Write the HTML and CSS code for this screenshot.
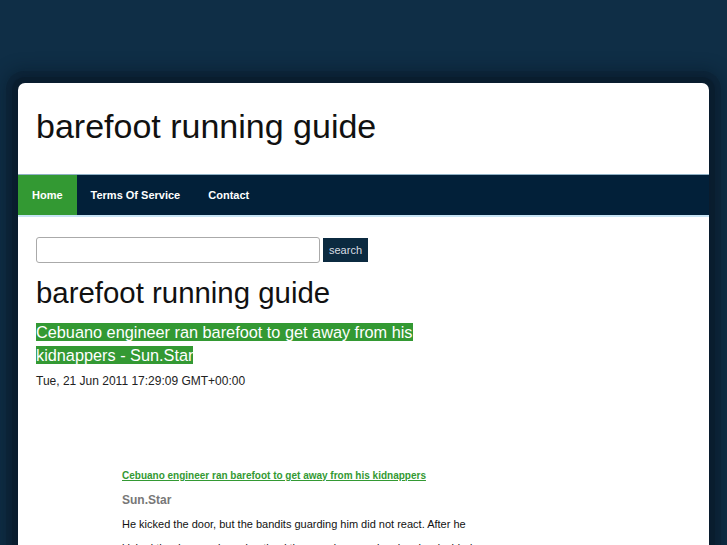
FILE: index.html
```html
<!DOCTYPE html>
<html>
<head>
<meta charset="utf-8">
<link rel="stylesheet" href="styles.css">
</head>
<body>
<div class="page">
  <div class="card">
    <header class="header">
      <h1 class="site-title">barefoot running guide</h1>
    </header>
    <nav class="nav">
      <a class="nav-item active" href="#">Home</a>
      <a class="nav-item" href="#">Terms Of Service</a>
      <a class="nav-item" href="#">Contact</a>
    </nav>
    <main class="content">
      <form class="search">
        <input class="search-input" type="text">
        <button class="search-btn" type="button">search</button>
      </form>
      <h2 class="page-title">barefoot running guide</h2>
      <h3 class="post-title"><a href="#">Cebuano engineer ran barefoot to get away from his kidnappers - Sun.Star</a></h3>
      <div class="post-date">Tue, 21 Jun 2011 17:29:09 GMT+00:00</div>
      <div class="post-body">
        <a class="src-link" href="#">Cebuano engineer ran barefoot to get away from his kidnappers</a>
        <div class="src-name">Sun.Star</div>
        <p class="excerpt">He kicked the door, but the bandits guarding him did not react. After he kicked the door again and noticed the guards were sleeping, he decided</p>
      </div>
    </main>
  </div>
</div>
</body>
</html>
```

FILE: styles.css
```css
html, body {
  margin: 0;
  padding: 0;
}
body {
  background: #0f2e46;
  font-family: "Liberation Sans", Arial, sans-serif;
  color: #111;
  overflow: hidden;
  height: 545px;
}
.page {
  padding: 83px 18px 0 18px;
}
.card {
  background: #fff;
  border-radius: 7px 7px 0 0;
  box-shadow: 0 0 0 6px rgba(8, 24, 38, 0.35), 0 0 0 12px rgba(8, 24, 38, 0.25), 0 0 16px 14px rgba(5, 18, 30, 0.35);
  min-height: 470px;
}
.header {
  height: 91px;
  padding: 0 18px;
  display: flex;
  align-items: center;
}
.site-title {
  margin: 0;
  font-size: 34px;
  font-weight: normal;
  color: #111;
  padding-bottom: 4px;
}
.nav {
  display: flex;
  background: #022039;
  border-top: 1px solid #8fb0c4;
  border-bottom: 2px solid #c7e4f5;
  height: 40px;
}
.nav-item {
  display: flex;
  align-items: center;
  padding: 0 14px;
  color: #fff;
  font-size: 11px;
  font-weight: bold;
  text-decoration: none;
}
.nav-item.active {
  background: #339933;
}
.content {
  padding: 20px 18px 0 18px;
}
.search {
  display: flex;
  align-items: center;
  gap: 3px;
  margin: 0;
}
.search-input {
  width: 280px;
  height: 22px;
  border: 1px solid #aaa;
  border-radius: 3px;
  padding: 1px;
  margin: 0;
}
.search-btn {
  background: #0b2a40;
  color: #d8dde2;
  border: none;
  font-family: "Liberation Sans", Arial, sans-serif;
  font-size: 11px;
  height: 24px;
  padding: 0 6px;
  margin: 0;
}
.page-title {
  margin: 12px 0 0 0;
  font-size: 29.4px;
  font-weight: normal;
  line-height: 36px;
}
.post-title {
  margin: 10px 0 0 0;
  font-size: 16.3px;
  font-weight: normal;
  line-height: 23px;
  width: 400px;
}
.post-title a {
  background: #339933;
  color: #fff;
  text-decoration: none;
}
.post-date {
  font-size: 12px;
  margin-top: 7px;
  color: #222;
}
.post-body {
  padding: 80px 0 0 86px;
  width: 370px;
}
.src-link {
  font-size: 10px;
  font-weight: bold;
  color: #339933;
  display: block;
  line-height: 16px;
}
.src-name {
  font-size: 12px;
  font-weight: bold;
  color: #777;
  margin-top: 8px;
  line-height: 16px;
}
.excerpt {
  font-size: 11px;
  line-height: 24px;
  margin: 4px 0 0 0;
  color: #111;
}
```
